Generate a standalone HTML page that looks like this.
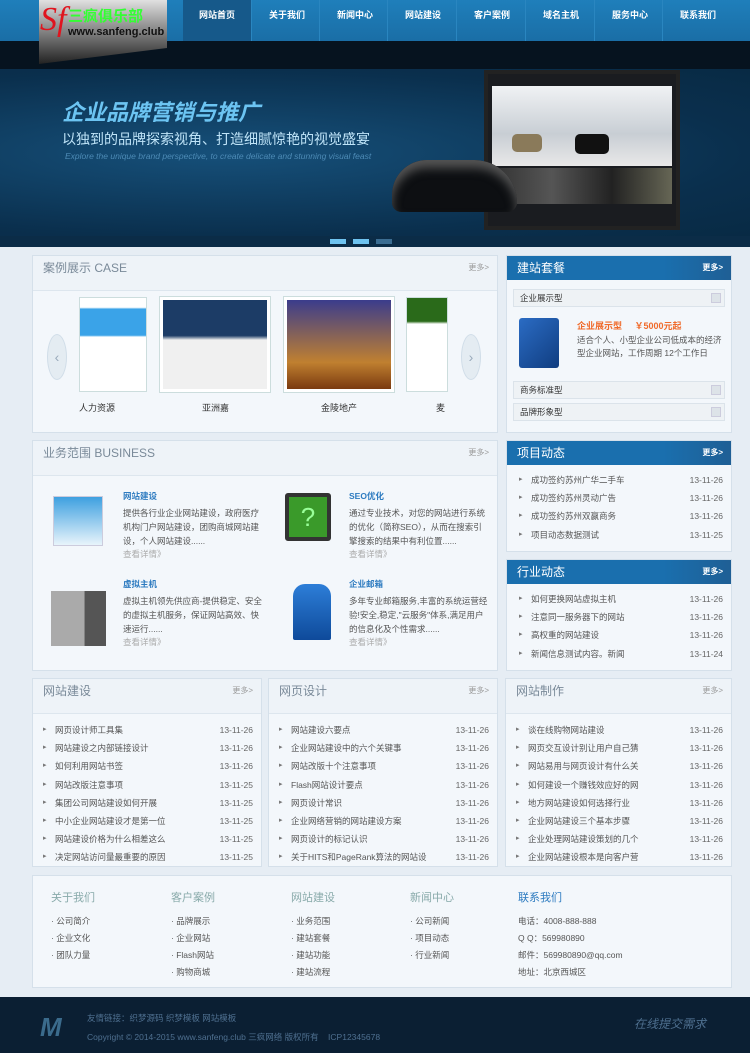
<!DOCTYPE html>
<html><head><meta charset="utf-8"><style>
*{margin:0;padding:0;box-sizing:border-box}
body{width:750px;height:1053px;background:#e6edf4;font-family:"Liberation Sans","Noto Sans CJK SC",sans-serif;font-size:9px;color:#555;position:relative;overflow:hidden}
.a{position:absolute}
.nav{left:0;top:0;width:750px;height:41px;background:linear-gradient(#1f7fbb,#1a6ea6)}
.nav span{position:absolute;top:0;height:41px;line-height:30px;color:#fff;font-size:9px;font-weight:bold;text-align:center;width:71px;border-left:1px solid #2a86c0}
.panel{background:#f3f7fb;border:1px solid #d5e0ea}
.ph{height:35px;border-bottom:1px solid #dde6ee;background:#eef3f8;color:#7a8a99;font-size:12px;line-height:24px;padding-left:10px;position:relative}
.more{position:absolute;right:8px;top:0;font-size:8px;color:#999}
.bh{height:24px;background:linear-gradient(90deg,#1a6fae 70%,#1f5f95);color:#fff;font-size:12px;line-height:24px;padding-left:10px;position:relative}
.bh .more{color:#fff;font-weight:bold}
ul{list-style:none}
li{height:18.2px;line-height:18.2px;font-size:8.5px;color:#555;position:relative;padding-left:14px}
li:before{content:"▸";position:absolute;left:2px;font-size:7px;color:#777}
li b{position:absolute;right:0;font-weight:normal;color:#666}
.sub{height:18px;border:1px solid #dbe3ea;background:#eef2f5;margin:0 6px;font-size:8.5px;line-height:16px;padding-left:6px;color:#333;position:relative}
.sub i{position:absolute;right:3px;top:3px;width:10px;height:10px;background:#dde3e8;border:1px solid #ccd}
.biz h4{color:#2d7bc0;font-size:8.5px;font-weight:bold}
.biz p{font-size:8.5px;line-height:14px;color:#555;width:140px}
.biz em{font-style:normal;color:#aaa;font-size:8.5px}
.ft h5{font-size:11px;color:#8aa;font-weight:normal;margin-bottom:6px}
.ft div{font-size:8.5px;line-height:17px;color:#555}
</style></head><body>
<div class="a nav">
<span style="left:183px;width:68px;background:#16598a;border:none">网站首页</span>
<span style="left:251px">关于我们</span><span style="left:319px">新闻中心</span><span style="left:387px">网站建设</span><span style="left:456px">客户案例</span><span style="left:525px">域名主机</span><span style="left:594px">服务中心</span><span style="left:662px">联系我们</span>
</div>
<div class="a" style="left:0;top:41px;width:750px;height:28px;background:#06131f"></div>
<div class="a" style="left:39px;top:0;width:128px;height:64px;background:linear-gradient(#e0e0e0,#222);clip-path:polygon(0 0,100% 0,100% 75%,0 100%)"></div>
<div class="a" style="left:40px;top:0;font-size:34px;font-style:italic;color:#e0141e;font-family:'Liberation Serif',serif;line-height:40px">Sf</div>
<div class="a" style="left:68px;top:5px;font-size:15px;color:#3f3;font-weight:bold">三疯俱乐部</div>
<div class="a" style="left:68px;top:26px;font-size:11px;color:#111;font-weight:bold">www.sanfeng.club</div>
<div class="a" style="left:0;top:69px;width:750px;height:168px;background:radial-gradient(ellipse at 30% 50%,#16507a,#0a2f4d 70%,#082a44)"></div>
<div class="a" style="left:62px;top:95px;font-size:22px;font-weight:bold;font-style:italic;color:#6cc4f2">企业品牌营销与推广</div>
<div class="a" style="left:62px;top:129px;font-size:14px;color:#bfe4f8">以独到的品牌探索视角、打造细腻惊艳的视觉盛宴</div>
<div class="a" style="left:65px;top:151px;font-size:8.5px;font-style:italic;color:#4d8bb6">Explore the unique brand perspective, to create delicate and stunning visual feast</div>
<div class="a" style="left:484px;top:70px;width:196px;height:160px;background:#1a1c20;border:4px solid #222"></div>
<div class="a" style="left:492px;top:86px;width:180px;height:80px;background:linear-gradient(#f0f2f4,#c8ced4 60%,#e8e8e8)"></div>
<div class="a" style="left:512px;top:134px;width:30px;height:18px;background:#8a7a5a;border-radius:5px"></div>
<div class="a" style="left:575px;top:134px;width:34px;height:20px;background:#111;border-radius:5px"></div>
<div class="a" style="left:492px;top:168px;width:180px;height:36px;background:linear-gradient(90deg,#333,#555,#222,#665)"></div>
<div class="a" style="left:392px;top:160px;width:125px;height:52px;background:#0d0f12;border-radius:45px 55px 12px 12px;box-shadow:inset 0 8px 10px #555"></div>
<div class="a" style="left:0;top:236px;width:750px;height:11px;background:#0b2c47"></div>
<div class="a" style="left:330px;top:239px;width:16px;height:5px;background:#6ec3f0"></div>
<div class="a" style="left:353px;top:239px;width:16px;height:5px;background:#6ec3f0"></div>
<div class="a" style="left:376px;top:239px;width:16px;height:5px;background:#3b6d92"></div>

<div class="a panel" style="left:32px;top:255px;width:466px;height:178px">
<div class="ph">案例展示 CASE<span class="more">更多&gt;</span></div>
<div class="a" style="left:14px;top:78px;width:20px;height:46px;border-radius:50%;background:#e4ecf2;border:1px solid #d0dde8;color:#9ab;font-size:14px;line-height:44px;text-align:center">‹</div>
<div class="a" style="left:428px;top:78px;width:20px;height:46px;border-radius:50%;background:#e4ecf2;border:1px solid #d0dde8;color:#9ab;font-size:14px;line-height:44px;text-align:center">›</div>
<div class="a" style="left:46px;top:41px;width:68px;height:95px;background:linear-gradient(#fff 10%,#3aa3e8 12%,#3aa3e8 40%,#fff 42%);border:1px solid #cdd"></div>
<div class="a" style="left:127px;top:41px;width:110px;height:95px;background:linear-gradient(#1c3c66 40%,#f0f0f0 45%);border:3px solid #fff;outline:1px solid #cdd"></div>
<div class="a" style="left:251px;top:41px;width:110px;height:95px;background:linear-gradient(#3b3c8c,#c08030 70%,#7a3a10);border:3px solid #fff;outline:1px solid #cdd"></div>
<div class="a" style="left:373px;top:41px;width:42px;height:95px;background:linear-gradient(#2a6a1a 25%,#fff 28%);border:1px solid #cdd"></div>
<div class="a" style="left:46px;top:145px;font-size:9px;color:#333">人力资源</div>
<div class="a" style="left:169px;top:145px;font-size:9px;color:#333">亚洲嘉</div>
<div class="a" style="left:288px;top:145px;font-size:9px;color:#333">金陵地产</div>
<div class="a" style="left:403px;top:145px;font-size:9px;color:#333">麦</div>
</div>

<div class="a panel" style="left:506px;top:255px;width:226px;height:178px">
<div class="bh">建站套餐<span class="more" style="top:0">更多&gt;</span></div>
<div class="sub" style="margin-top:9px">企业展示型<i></i></div>
<div class="a" style="left:12px;top:62px;width:40px;height:50px;background:linear-gradient(135deg,#2b6cc4,#103d80);border-radius:3px"></div>
<div class="a" style="left:70px;top:63px;color:#f06a2a;font-size:9px;font-weight:bold">企业展示型 &nbsp;&nbsp;&nbsp; ￥5000元起</div>
<div class="a" style="left:70px;top:78px;width:150px;font-size:8.5px;line-height:13px;color:#555">适合个人、小型企业公司低成本的经济型企业网站，工作周期 12个工作日</div>
<div class="sub" style="position:absolute;top:125px;left:0;width:212px">商务标准型<i></i></div>
<div class="sub" style="position:absolute;top:147px;left:0;width:212px">品牌形象型<i></i></div>
</div>

<div class="a panel biz" style="left:32px;top:440px;width:466px;height:231px">
<div class="ph">业务范围 BUSINESS<span class="more">更多&gt;</span></div>
<div class="a" style="left:20px;top:55px;width:50px;height:50px;background:linear-gradient(#3ea0e0,#e8f4fb);border:1px solid #ccd"></div>
<div class="a" style="left:90px;top:49px"><h4>网站建设</h4><p style="margin-top:4px">提供各行业企业网站建设，政府医疗机构门户网站建设，团购商城网站建设，个人网站建设......</p><em>查看详情》</em></div>
<div class="a" style="left:252px;top:52px;width:46px;height:48px;background:#3a9a2a;border:4px solid #333;border-radius:3px;color:#9f9;font-size:26px;text-align:center;line-height:40px">?</div>
<div class="a" style="left:316px;top:49px"><h4>SEO优化</h4><p style="margin-top:4px">通过专业技术，对您的网站进行系统的优化（简称SEO），从而在搜索引擎搜索的结果中有利位置......</p><em>查看详情》</em></div>
<div class="a" style="left:18px;top:150px;width:55px;height:55px;background:linear-gradient(90deg,#aaa 60%,#555 62%)"></div>
<div class="a" style="left:90px;top:137px"><h4>虚拟主机</h4><p style="margin-top:4px">虚拟主机领先供应商-提供稳定、安全的虚拟主机服务，保证网站高效、快速运行......</p><em>查看详情》</em></div>
<div class="a" style="left:260px;top:143px;width:38px;height:56px;background:linear-gradient(#2d7ed8,#0e4a9a);border-radius:12px 12px 2px 2px"></div>
<div class="a" style="left:316px;top:137px"><h4>企业邮箱</h4><p style="margin-top:4px">多年专业邮箱服务,丰富的系统运营经验!安全,稳定,"云服务"体系,满足用户的信息化及个性需求......</p><em>查看详情》</em></div>
</div>

<div class="a panel" style="left:506px;top:440px;width:226px;height:112px">
<div class="bh">项目动态<span class="more">更多&gt;</span></div>
<ul style="padding:6px 8px 0 10px">
<li>成功签约苏州广华二手车<b>13-11-26</b></li><li>成功签约苏州灵动广告<b>13-11-26</b></li><li>成功签约苏州双赢商务<b>13-11-26</b></li><li>项目动态数据测试<b>13-11-25</b></li></ul></div>
<div class="a panel" style="left:506px;top:559px;width:226px;height:112px">
<div class="bh">行业动态<span class="more">更多&gt;</span></div>
<ul style="padding:6px 8px 0 10px">
<li>如何更换网站虚拟主机<b>13-11-26</b></li><li>注意同一服务器下的网站<b>13-11-26</b></li><li>高权重的网站建设<b>13-11-26</b></li><li>新闻信息测试内容。新闻<b>13-11-24</b></li></ul></div>

<div class="a panel" style="left:32px;top:678px;width:230px;height:189px">
<div class="ph">网站建设<span class="more">更多&gt;</span></div>
<ul style="padding:7px 8px 0 8px">
<li>网页设计师工具集<b>13-11-26</b></li><li>网站建设之内部链接设计<b>13-11-26</b></li><li>如何利用网站书签<b>13-11-26</b></li><li>网站改版注意事项<b>13-11-25</b></li><li>集团公司网站建设如何开展<b>13-11-25</b></li><li>中小企业网站建设才是第一位<b>13-11-25</b></li><li>网站建设价格为什么相差这么<b>13-11-25</b></li><li>决定网站访问量最重要的原因<b>13-11-25</b></li></ul></div>
<div class="a panel" style="left:268px;top:678px;width:230px;height:189px">
<div class="ph">网页设计<span class="more">更多&gt;</span></div>
<ul style="padding:7px 8px 0 8px">
<li>网站建设六要点<b>13-11-26</b></li><li>企业网站建设中的六个关键事<b>13-11-26</b></li><li>网站改版十个注意事项<b>13-11-26</b></li><li>Flash网站设计要点<b>13-11-26</b></li><li>网页设计常识<b>13-11-26</b></li><li>企业网络营销的网站建设方案<b>13-11-26</b></li><li>网页设计的标记认识<b>13-11-26</b></li><li>关于HITS和PageRank算法的网站设<b>13-11-26</b></li></ul></div>
<div class="a panel" style="left:505px;top:678px;width:227px;height:189px">
<div class="ph">网站制作<span class="more">更多&gt;</span></div>
<ul style="padding:7px 8px 0 8px">
<li>谈在线购物网站建设<b>13-11-26</b></li><li>网页交互设计别让用户自己猜<b>13-11-26</b></li><li>网站易用与网页设计有什么关<b>13-11-26</b></li><li>如何建设一个赚钱效应好的网<b>13-11-26</b></li><li>地方网站建设如何选择行业<b>13-11-26</b></li><li>企业网站建设三个基本步骤<b>13-11-26</b></li><li>企业处理网站建设策划的几个<b>13-11-26</b></li><li>企业网站建设根本是向客户营<b>13-11-26</b></li></ul></div>

<div class="a panel ft" style="left:32px;top:875px;width:700px;height:113px">
<div class="a" style="left:18px;top:14px"><h5>关于我们</h5><div>· 公司简介<br>· 企业文化<br>· 团队力量</div></div>
<div class="a" style="left:138px;top:14px"><h5>客户案例</h5><div>· 品牌展示<br>· 企业网站<br>· Flash网站<br>· 购物商城</div></div>
<div class="a" style="left:258px;top:14px"><h5>网站建设</h5><div>· 业务范围<br>· 建站套餐<br>· 建站功能<br>· 建站流程</div></div>
<div class="a" style="left:377px;top:14px"><h5>新闻中心</h5><div>· 公司新闻<br>· 项目动态<br>· 行业新闻</div></div>
<div class="a" style="left:485px;top:14px"><h5 style="color:#2d7bc0">联系我们</h5><div>电话：4008-888-888<br>Q Q：569980890<br>邮件：569980890@qq.com<br>地址：北京西城区</div></div>
</div>

<div class="a" style="left:0;top:997px;width:750px;height:56px;background:#0b1f33"></div>
<div class="a" style="left:40px;top:1012px;font-size:26px;font-weight:bold;color:#3b6b8c;font-style:italic">M</div>
<div class="a" style="left:87px;top:1012px;font-size:8.5px;color:#4f7090">友情链接：织梦源码 织梦模板 网站模板</div>
<div class="a" style="left:87px;top:1031px;font-size:8.5px;color:#4f7090">Copyright © 2014-2015 www.sanfeng.club 三疯网络 版权所有 &nbsp;&nbsp; ICP12345678</div>
<div class="a" style="left:634px;top:1015px;font-size:12px;color:#4f7090;font-style:italic">在线提交需求</div>
</body></html>
